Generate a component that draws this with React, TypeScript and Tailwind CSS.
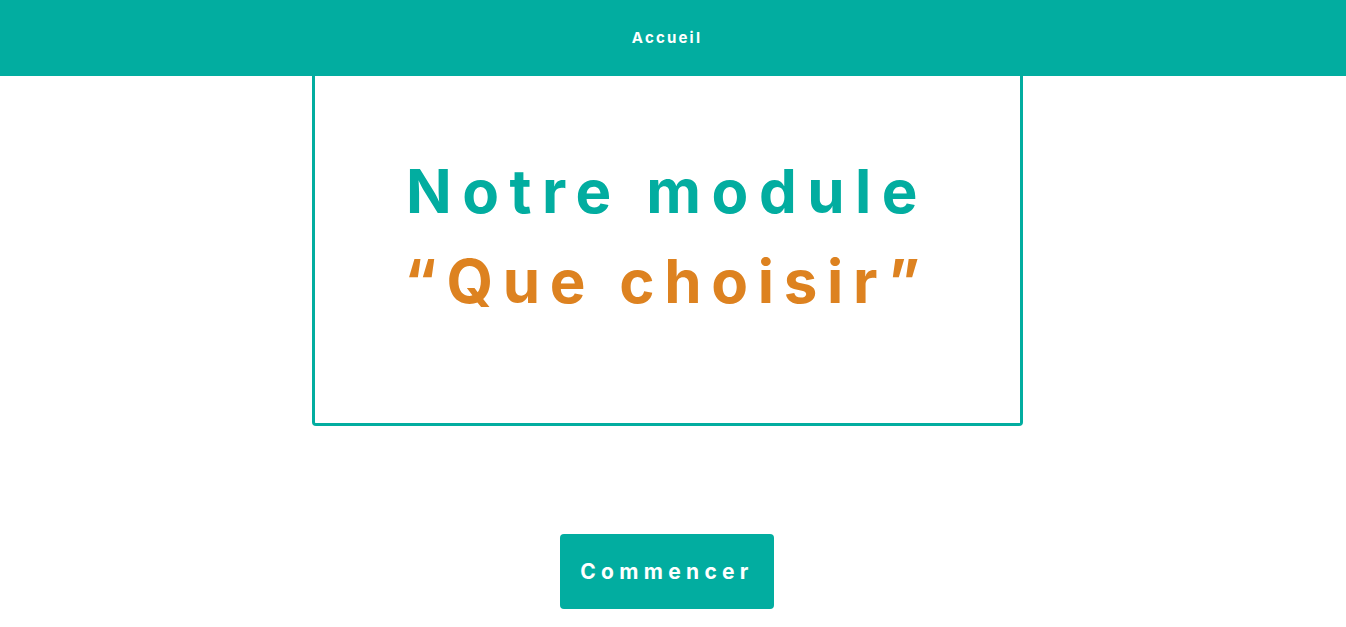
export default function App() {
  return (
    <div className="min-h-[627px] w-full bg-white font-['Inter',sans-serif]">
      <header className="flex h-[76px] items-center justify-center bg-[#02ada0] pr-[12px]">
        <a href="#" className="text-[15px] font-bold tracking-[2.2px] text-white">
          Accueil
        </a>
      </header>

      <main className="flex flex-col items-center pr-[12px]">
        <section className="flex w-[711px] flex-col items-center rounded-b-[4px] border-x-[3px] border-b-[3px] border-[#02ada0] pt-[70px] pb-[97px]">
          <h1 className="text-center text-[60px] leading-[90px] font-bold">
            <span className="block tracking-[10.5px] text-[#02ada0]">Notre module</span>
            <span className="block tracking-[9.7px] text-[#dd8220]">“Que choisir”</span>
          </h1>
        </section>

        <button className="mt-[108px] h-[75px] w-[214px] rounded-[4px] bg-[#02ada0] text-[21px] font-bold tracking-[5.3px] text-white">
          Commencer
        </button>
      </main>
    </div>
  );
}
